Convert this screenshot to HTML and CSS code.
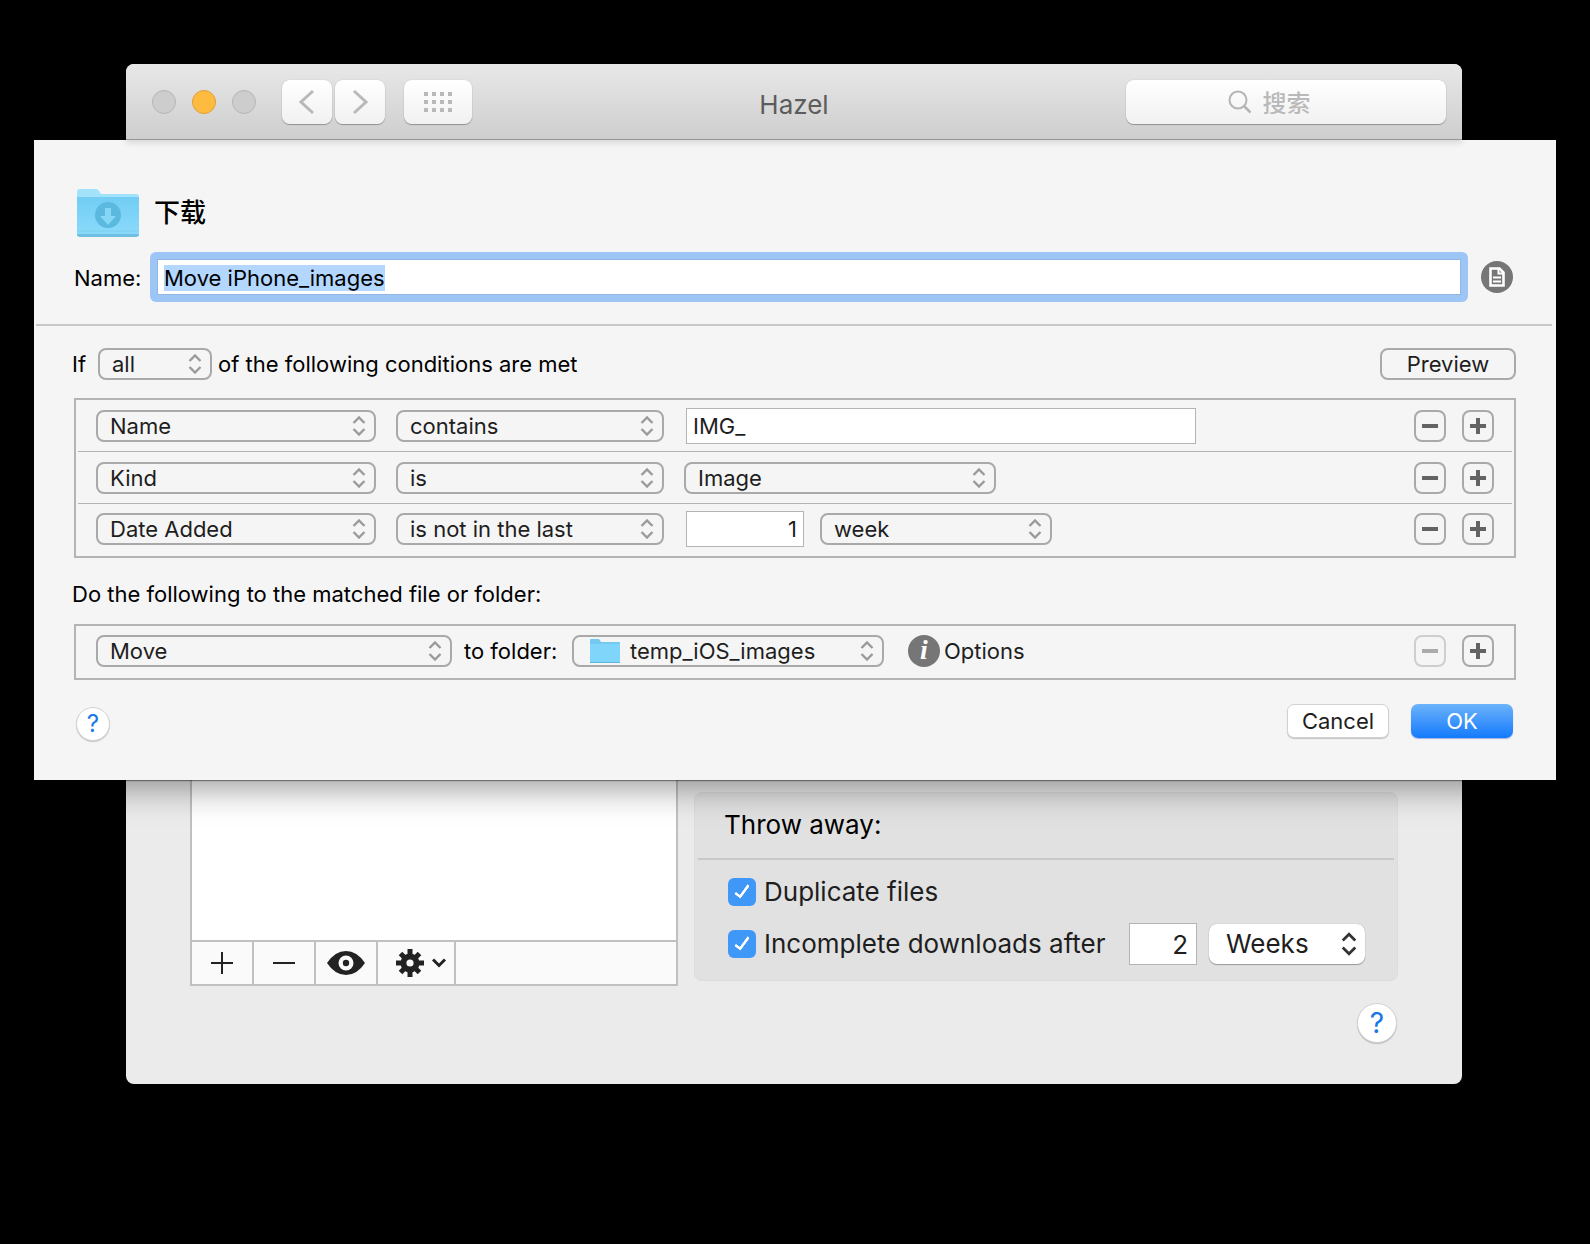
FILE: index.html
```html
<!DOCTYPE html>
<html lang="zh-CN">
<head>
    <meta charset="utf-8">
    <title>Hazel</title>
    <link rel="stylesheet" href="styles.css">
</head>
<body>
    <svg class="defs" aria-hidden="true">
        <symbol id="updown" viewBox="0 0 14 20">
            <path d="M1.5 7 7 1.5 12.5 7M1.5 13 7 18.5 12.5 13" fill="none" stroke="currentColor" stroke-width="2.4"/>
        </symbol>
        <symbol id="minus" viewBox="0 0 16 16">
            <path d="M0 8h16" stroke="currentColor" stroke-width="4"/>
        </symbol>
        <symbol id="plus" viewBox="0 0 16 16">
            <path d="M0 8h16M8 0v16" stroke="currentColor" stroke-width="4"/>
        </symbol>
    </svg>

    <div class="window">
        <header class="titlebar">
            <div class="titlebar-left">
                <div class="lights">
                    <button class="light" aria-label="Close"></button>
                    <button class="light minimize" aria-label="Minimize"></button>
                    <button class="light" aria-label="Zoom"></button>
                </div>
                <div class="nav">
                    <button class="tool" aria-label="Back">
                        <svg width="16" height="26" viewBox="0 0 16 26"><path d="M14 2 2 13l12 11" fill="none" stroke="#b9b9b9" stroke-width="3"/></svg>
                    </button>
                    <button class="tool" aria-label="Forward">
                        <svg width="16" height="26" viewBox="0 0 16 26"><path d="m2 2 12 11L2 24" fill="none" stroke="#b9b9b9" stroke-width="3"/></svg>
                    </button>
                </div>
                <button class="tool wide" aria-label="Show All">
                    <svg width="28" height="20" viewBox="0 0 28 20"><path d="M0 2h28M0 10h28M0 18h28" stroke="#b9b9b9" stroke-width="4" stroke-dasharray="4"/></svg>
                </button>
            </div>
            <h1 class="title">Hazel</h1>
            <label class="search">
                <svg width="24" height="24" viewBox="0 0 24 24"><circle cx="10" cy="10" r="8.5" fill="none" stroke="#b4b4b4" stroke-width="2"/><path d="m16 16 6.5 6.5" stroke="#b4b4b4" stroke-width="2.5"/></svg>
                <input type="text" placeholder="搜索" aria-label="搜索">
            </label>
        </header>

        <section class="sheet">
            <div class="folder-head">
                <svg width="62" height="50" viewBox="0 0 62 50">
                    <defs>
                        <linearGradient id="front" x1="0" y1="0" x2="0" y2="1">
                            <stop offset="0" stop-color="#72cdf4"/>
                            <stop offset="1" stop-color="#8bdbfb"/>
                        </linearGradient>
                    </defs>
                    <path d="M0 48V4q0-3 3-3h16q2 0 3 2l1 2q1 1 3 1h33q3 0 3 3v39z" fill="#a3e2fb"/>
                    <path d="M0 9h62v36q0 3-3 3H3q-3 0-3-3z" fill="url(#front)"/>
                    <path d="M0 43h62" stroke="#7fcfee"/>
                    <path d="M0 46h62q0 3-3 3H3q-3 0-3-3z" fill="#6fbfe0"/>
                    <circle cx="31" cy="27" r="13" fill="#5bb8de"/>
                    <path d="M28 20h6v8h5l-8 9-8-9h5z" fill="#86d7f7"/>
                </svg>
                <h2>下载</h2>
            </div>
            <div class="name-row">
                <label for="name">Name:</label>
                <input class="name-field" id="name" type="text" value="Move iPhone_images" autofocus>
                <button class="round" aria-label="Notes">
                    <svg width="32" height="32" viewBox="0 0 32 32">
                        <circle cx="16" cy="16" r="16" fill="#767676"/>
                        <path d="M9.5 7.5h9l4 4v13h-13z" fill="none" stroke="#fff" stroke-width="2.6"/>
                        <path d="M17.5 7v5.5H23M12 16.5h8M12 20.5h8" fill="none" stroke="#fff" stroke-width="2"/>
                    </svg>
                </button>
            </div>

            <hr>

            <div class="match-row">
                <label for="match">If</label>
                <span class="popup w-match">
                    <select id="match"><option>all</option><option>any</option></select>
                    <svg><use href="#updown"/></svg>
                </span>
                <span>of the following conditions are met</span>
                <button class="bezel preview">Preview</button>
            </div>

            <div class="rules">
                <div class="rule">
                    <span class="popup w-attr">
                        <select aria-label="Attribute"><option>Name</option></select>
                        <svg><use href="#updown"/></svg>
                    </span>
                    <span class="popup w-op">
                        <select aria-label="Operator"><option>contains</option></select>
                        <svg><use href="#updown"/></svg>
                    </span>
                    <input class="field w-text" type="text" value="IMG_" aria-label="Value">
                    <span class="row-buttons">
                        <button class="bezel square" aria-label="Remove condition"><svg><use href="#minus"/></svg></button>
                        <button class="bezel square" aria-label="Add condition"><svg><use href="#plus"/></svg></button>
                    </span>
                </div>
                <div class="rule">
                    <span class="popup w-attr">
                        <select aria-label="Attribute"><option>Kind</option></select>
                        <svg><use href="#updown"/></svg>
                    </span>
                    <span class="popup w-op">
                        <select aria-label="Operator"><option>is</option></select>
                        <svg><use href="#updown"/></svg>
                    </span>
                    <span class="popup w-kind">
                        <select aria-label="Value"><option>Image</option></select>
                        <svg><use href="#updown"/></svg>
                    </span>
                    <span class="row-buttons">
                        <button class="bezel square" aria-label="Remove condition"><svg><use href="#minus"/></svg></button>
                        <button class="bezel square" aria-label="Add condition"><svg><use href="#plus"/></svg></button>
                    </span>
                </div>
                <div class="rule">
                    <span class="popup w-attr">
                        <select aria-label="Attribute"><option>Date Added</option></select>
                        <svg><use href="#updown"/></svg>
                    </span>
                    <span class="popup w-op">
                        <select aria-label="Operator"><option>is not in the last</option></select>
                        <svg><use href="#updown"/></svg>
                    </span>
                    <span class="amount">
                        <input class="field w-num" type="text" value="1" aria-label="Amount">
                        <span class="popup w-unit">
                            <select aria-label="Unit"><option>week</option></select>
                            <svg><use href="#updown"/></svg>
                        </span>
                    </span>
                    <span class="row-buttons">
                        <button class="bezel square" aria-label="Remove condition"><svg><use href="#minus"/></svg></button>
                        <button class="bezel square" aria-label="Add condition"><svg><use href="#plus"/></svg></button>
                    </span>
                </div>
            </div>

            <p class="do-text">Do the following to the matched file or folder:</p>

            <div class="rules">
                <div class="rule action">
                    <span class="popup w-action">
                        <select aria-label="Action"><option>Move</option></select>
                        <svg><use href="#updown"/></svg>
                    </span>
                    <label for="target">to folder:</label>
                    <span class="popup w-kind with-icon">
                        <svg class="folder" viewBox="0 0 30 26">
                            <path d="M0 25V2q0-1 1-1h8l2 3h18q1 0 1 1v20z" fill="#74c9ee"/>
                            <path d="M0 6h30v19H0z" fill="#7fd6fa"/>
                            <path d="M0 24.5h30" stroke="#5db7dd"/>
                        </svg>
                        <select id="target"><option>temp_iOS_images</option></select>
                        <svg><use href="#updown"/></svg>
                    </span>
                    <button class="options"><i>i</i>Options</button>
                    <span class="row-buttons">
                        <button class="bezel square" aria-label="Remove action" disabled><svg><use href="#minus"/></svg></button>
                        <button class="bezel square" aria-label="Add action"><svg><use href="#plus"/></svg></button>
                    </span>
                </div>
            </div>

            <div class="sheet-footer">
                <button class="help">?</button>
                <button class="push">Cancel</button>
                <button class="push default">OK</button>
            </div>
        </section>

        <main class="pane">
            <div class="folders">
                <div class="folder-list"></div>
                <div class="list-tools">
                    <button aria-label="Add">
                        <svg width="22" height="22" viewBox="0 0 22 22"><path d="M0 11h22M11 0v22" stroke="#222" stroke-width="2"/></svg>
                    </button>
                    <button aria-label="Remove">
                        <svg width="22" height="22" viewBox="0 0 22 22"><path d="M0 11h22" stroke="#222" stroke-width="2"/></svg>
                    </button>
                    <button aria-label="Preview rules">
                        <svg width="38" height="24" viewBox="0 0 38 24">
                            <path d="M0 12Q8 0 19 0t19 12Q30 24 19 24T0 12z" fill="#222"/>
                            <circle cx="19" cy="12" r="7.5" fill="#fafafa"/>
                            <circle cx="19" cy="12" r="3.2" fill="#222"/>
                        </svg>
                    </button>
                    <button class="gear" aria-label="Actions">
                        <svg width="28" height="28" viewBox="-14 -14 28 28">
                            <path d="M0-14v28M-14 0h28M-9.5-9.5l19 19M9.5-9.5l-19 19" stroke="#222" stroke-width="5"/>
                            <circle r="9.5" fill="#222"/>
                            <circle r="3.6" fill="#fafafa"/>
                        </svg>
                        <svg width="14" height="10" viewBox="0 0 14 10"><path d="m1 1.5 6 6 6-6" fill="none" stroke="#222" stroke-width="3"/></svg>
                    </button>
                </div>
            </div>

            <div class="throw">
                <h3>Throw away:</h3>
                <div class="throw-rows">
                    <div class="throw-row">
                        <label class="check"><input type="checkbox" checked>Duplicate files</label>
                    </div>
                    <div class="throw-row">
                        <label class="check"><input type="checkbox" checked>Incomplete downloads after</label>
                        <span class="after">
                            <input class="field" type="text" value="2" aria-label="Age">
                            <span class="popup solid">
                                <select aria-label="Age unit"><option>Weeks</option></select>
                                <svg><use href="#updown"/></svg>
                            </span>
                        </span>
                    </div>
                </div>
            </div>

            <button class="help large">?</button>
        </main>
    </div>

    <script>
        // The rule name starts selected so it can be typed over
        const nameField = document.getElementById('name');
        nameField.focus();
        nameField.select();
    </script>
</body>
</html>
```
FILE: styles.css
```css
* {
    box-sizing: border-box;
}

body {
    margin: 0;
    padding: 64px 128px 160px 126px;
    background-color: #000;
    font-family: Inter, "Noto Sans CJK SC", sans-serif;
    font-size: 22px;
    line-height: 26px;
    color: #000;
}

button, input, select {
    margin: 0;
    padding: 0;
    border: none;
    background: none;
    font: inherit;
    color: #1e1e1e;
}

button {
    display: flex;
    align-items: center;
    justify-content: center;
}

h1, h2, h3, p {
    margin: 0;
    font-weight: normal;
}

.defs {
    display: none;
}

.window {
    border-radius: 8px;
    background-color: #ebebeb;
}

/* Title bar */
.titlebar {
    position: relative;
    z-index: 2;
    display: grid;
    grid-template-columns: 1fr auto 1fr;
    align-items: center;
    height: 76px;
    padding: 0 16px;
    border-bottom: 1px solid #979797;
    border-radius: 8px 8px 0 0;
    background: linear-gradient(#e8e8e8, #cecece);
    box-shadow: 0 3px 6px rgba(0, 0, 0, 0.12);
}

.titlebar-left, .lights, .nav {
    display: flex;
    align-items: center;
}

.lights {
    gap: 16px;
    margin: 0 26px 0 10px;
}

.light {
    width: 24px;
    height: 24px;
    border: 1px solid #b5b5b5;
    border-radius: 50%;
    background-color: #cdcdcd;
}

.light.minimize {
    border-color: #e0a033;
    background-color: #fdbc40;
}

.nav {
    gap: 3px;
    margin-right: 19px;
}

.tool, .search {
    height: 44px;
    border-radius: 8px;
    background: linear-gradient(#fff, #f1f1f1);
    box-shadow: 0 1px 1px rgba(0, 0, 0, 0.3), 0 0 1px rgba(0, 0, 0, 0.25);
}

.tool {
    width: 50px;
}

.tool.wide {
    width: 68px;
}

.title {
    padding-top: 6px;
    font-size: 26px;
    line-height: 32px;
    color: #5c5c5c;
}

.search {
    display: flex;
    align-items: center;
    justify-content: center;
    justify-self: end;
    gap: 11px;
    width: 320px;
}

.search input {
    width: 82px;
    padding-top: 4px;
    font-size: 24px;
    font-weight: 500;
}

.search input::placeholder {
    color: #b9b9b9;
}

/* Rule sheet, wider than the window it drops from */
.sheet {
    position: relative;
    z-index: 1;
    margin: 0 -94px 0 -92px;
    padding: 48px 36px 39px;
    background-color: #f5f5f5;
    box-shadow: 0 1px 1px rgba(0, 0, 0, 0.4), 0 8px 32px rgba(0, 0, 0, 0.4);
}

.folder-head {
    display: flex;
    align-items: center;
    gap: 15px;
    padding-left: 7px;
}

.folder-head h2 {
    font-size: 26px;
    font-weight: 500;
    line-height: 32px;
}

.name-row {
    display: flex;
    align-items: center;
    margin-top: 21px;
    padding: 0 7px 0 4px;
}

.name-row label {
    width: 83px;
    padding-top: 2px;
}

.name-field {
    flex: 1;
    height: 36px;
    padding: 2px 6px 0;
    border: 1px solid #93b5e4;
    background-color: #fff;
    color: #000;
    outline: none;
    box-shadow: 0 0 0 7px #9dc6f6;
    clip-path: inset(-7px round 6px);
}

.name-field::selection {
    background-color: #b3d7fe;
    color: #000;
}

.round {
    margin-left: 20px;
}

hr {
    height: 2px;
    margin: 29px -32px 22px -34px;
    border: none;
    background-color: #c8c8c8;
}

.match-row {
    display: flex;
    align-items: center;
    padding-left: 2px;
}

.match-row label {
    width: 26px;
}

.match-row .popup {
    margin-right: 6px;
}

/* Pop-up menus */
.popup {
    position: relative;
    display: block;
    flex: none;
}

.popup select {
    display: block;
    width: 100%;
    height: 32px;
    padding: 0 30px 0 12px;
    border: 2px solid #a9a9a9;
    border-radius: 8px;
    appearance: none;
    background-color: #f5f5f5;
}

.popup svg {
    position: absolute;
    top: 6px;
    right: 10px;
    width: 14px;
    height: 20px;
    color: #9a9a9a;
    pointer-events: none;
}

.popup.with-icon select {
    padding-left: 56px;
}

.popup svg.folder {
    top: 3px;
    right: auto;
    left: 18px;
    width: 30px;
    height: 26px;
}

.w-match { width: 114px; }
.w-attr { width: 280px; }
.w-op { width: 268px; }
.w-kind { width: 312px; }
.w-unit { width: 232px; }
.w-action { width: 356px; }
.w-text { width: 510px; }
.w-num { width: 118px; }

.bezel {
    height: 32px;
    border: 2px solid #a9a9a9;
    border-radius: 8px;
}

.preview {
    width: 136px;
    margin-right: 4px;
    margin-left: auto;
}

.square {
    width: 32px;
    color: #636363;
}

.square svg {
    width: 16px;
    height: 16px;
}

.square:disabled {
    opacity: 0.5;
}

.field {
    height: 36px;
    padding: 0 6px;
    border: 1px solid #b4b4b4;
    background-color: #fff;
}

.w-num {
    text-align: right;
}

/* Condition and action rows */
.rules {
    margin: 18px 4px 0;
    padding: 0 2px 2px;
    border: 2px solid #b4b4b4;
}

.rule {
    display: flex;
    align-items: center;
    gap: 20px;
    height: 52px;
    padding: 0 18px;
    border-bottom: 1px solid #b4b4b4;
}

.rule:last-child {
    border-bottom: none;
    height: 50px;
}

.rule .field {
    margin-left: 2px;
}

.amount {
    display: flex;
    align-items: center;
    gap: 16px;
}

.row-buttons {
    display: flex;
    gap: 16px;
    margin-left: auto;
}

.do-text {
    margin-top: 23px;
    padding-left: 2px;
}

.do-text + .rules {
    margin-top: 17px;
}

.action {
    gap: 12px;
}

.action label {
    width: 96px;
}

.options {
    gap: 4px;
    margin-left: 12px;
}

.options i {
    width: 32px;
    height: 32px;
    border-radius: 50%;
    background-color: #767676;
    color: #fff;
    font: italic bold 28px/30px "Liberation Serif", serif;
    text-align: center;
}

.sheet-footer {
    display: flex;
    align-items: flex-start;
    gap: 22px;
    margin-top: 24px;
    padding: 0 7px 0 6px;
}

.help {
    width: 34px;
    height: 34px;
    margin: 3px auto 0 0;
    border: 1px solid #d2d2d2;
    border-radius: 50%;
    background-color: #fff;
    box-shadow: 0 1px 1px rgba(0, 0, 0, 0.2);
    color: #1a78e6;
    font-size: 24px;
}

.push {
    width: 102px;
    height: 34px;
    border: 1px solid #d2d2d2;
    border-radius: 7px;
    background-color: #fff;
    box-shadow: 0 1px 1px rgba(0, 0, 0, 0.2);
}

.push.default {
    border: none;
    background: linear-gradient(#6cb3fa, #147afd);
    box-shadow: 0 1px 1px rgba(0, 60, 200, 0.35);
    color: #fff;
}

/* Window contents below the sheet */
.pane {
    display: grid;
    grid-template-columns: 488px 1fr;
    column-gap: 16px;
    row-gap: 17px;
    padding: 0 64px 41px;
    font-size: 26px;
    line-height: 32px;
}

.folders {
    border: 2px solid #c0c0c0;
    border-top: none;
    background-color: #fff;
}

.folder-list {
    height: 160px;
}

.list-tools {
    display: flex;
    height: 44px;
    border-top: 2px solid #c0c0c0;
    background-color: #fafafa;
}

.list-tools button {
    width: 62px;
    border-right: 2px solid #c0c0c0;
}

.list-tools .gear {
    width: 78px;
    gap: 8px;
    padding-left: 10px;
}

.throw {
    margin: 12px 0 5px;
    border: 1px solid #dcdcdc;
    border-radius: 8px;
    background-color: #e1e1e1;
}

.throw h3 {
    margin: 0 3px;
    padding: 16px 26px 17px;
    border-bottom: 2px solid #c8c8c8;
    font-size: 26px;
}

.throw-rows {
    padding: 6px 32px 10px 33px;
}

.throw-row {
    display: flex;
    align-items: center;
    justify-content: space-between;
    height: 52px;
}

.check {
    display: flex;
    align-items: center;
    gap: 8px;
    color: #1e1e1e;
}

.check input {
    width: 28px;
    height: 28px;
    appearance: none;
    border-radius: 6px;
    background-color: #3f98f8;
}

/* White tick */
.check input:checked::before {
    content: "";
    display: block;
    width: 5px;
    height: 13px;
    margin: 4px 0 0 10px;
    border: solid #fff;
    border-width: 0 3px 3px 0;
    border-radius: 1px;
    transform: rotate(36deg);
}

.after {
    display: flex;
    align-items: center;
    gap: 12px;
}

.after .field {
    width: 68px;
    height: 42px;
    padding: 0 8px;
    text-align: right;
}

.popup.solid {
    width: 156px;
}

.popup.solid select {
    height: 40px;
    padding: 0 40px 0 17px;
    border: none;
    background-color: #fff;
    box-shadow: 0 1px 1px rgba(0, 0, 0, 0.3), 0 0 1px rgba(0, 0, 0, 0.3);
}

.popup.solid svg {
    top: 8px;
    right: 8px;
    width: 16px;
    height: 24px;
    color: #333;
}

.help.large {
    grid-column: 2;
    width: 40px;
    height: 40px;
    margin: 0 1px 0 auto;
    font-size: 28px;
}
```
